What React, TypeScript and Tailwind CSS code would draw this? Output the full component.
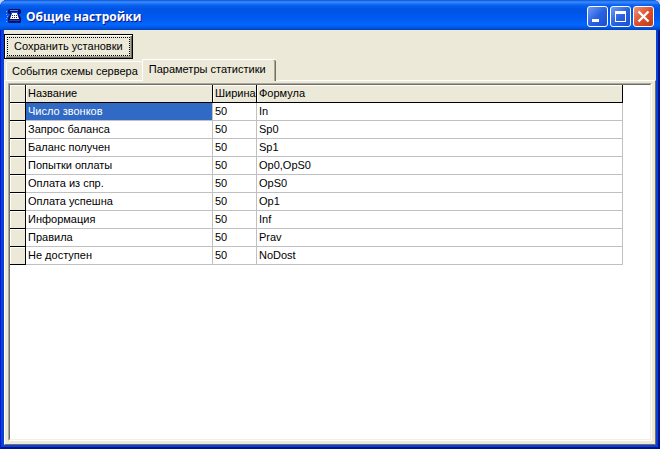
import { useState } from 'react';

interface StatRow {
  name: string;
  width: number;
  formula: string;
}

const rows: StatRow[] = [
  { name: 'Число звонков', width: 50, formula: 'In' },
  { name: 'Запрос баланса', width: 50, formula: 'Sp0' },
  { name: 'Баланс получен', width: 50, formula: 'Sp1' },
  { name: 'Попытки оплаты', width: 50, formula: 'Op0,OpS0' },
  { name: 'Оплата из спр.', width: 50, formula: 'OpS0' },
  { name: 'Оплата успешна', width: 50, formula: 'Op1' },
  { name: 'Информация', width: 50, formula: 'Inf' },
  { name: 'Правила', width: 50, formula: 'Prav' },
  { name: 'Не доступен', width: 50, formula: 'NoDost' },
];

function PhoneIcon() {
  return (
    <svg viewBox="0 0 16 16" className="h-4 w-4" aria-hidden="true">
      {/* Handset */}
      <path d="M4 1h9l2 1v3l-1 1h-2V4H5v2H3L2 5V2z" fill="#04106a" />
      <path d="M4 2h8v1H4z" fill="#5a86e0" />
      {/* Body with the keypad */}
      <path d="M5 5h7l3 5v4l-1 1H3l-1-1v-4z" fill="#04106a" />
      <path d="M6 5h5l2 6H4z" fill="#fff" />
      <path d="M6 7h1v1H6zM8 7h1v1H8zM10 7h1v1h-1zM6 9h1v1H6zM8 9h1v1H8zM10 9h1v1h-1z" fill="#1c2a50" />
      <path d="M3 12h11v1H3z" fill="#1d3fae" />
      <path d="M0 3h1v1H0zM0 6h1v1H0zM1 8h1v1H1zM0 10h1v1H0zM0 13h1v1H0z" fill="#7fb0f8" />
    </svg>
  );
}

function WindowButtons() {
  const base = 'flex h-[21px] w-[21px] items-center justify-center rounded-[3px] border border-white';
  const blue = 'bg-gradient-to-br from-[#6f9cf2] via-[#2a62e2] to-[#1b4fd0]';
  return (
    <div className="flex gap-[2px]">
      <button className={`${base} ${blue}`} aria-label="Свернуть">
        <svg viewBox="0 0 19 19" className="h-[19px] w-[19px]" shapeRendering="crispEdges">
          <path d="M4 12h7v3H4z" fill="#fff" />
        </svg>
      </button>
      <button className={`${base} ${blue}`} aria-label="Развернуть">
        <svg viewBox="0 0 19 19" className="h-[19px] w-[19px]" shapeRendering="crispEdges">
          <path fillRule="evenodd" d="M4 4h11v11H4zM5 7v7h9V7z" fill="#fff" />
        </svg>
      </button>
      <button
        className={`${base} bg-gradient-to-br from-[#ee9478] via-[#dc4f2c] to-[#c23c16]`}
        aria-label="Закрыть"
      >
        <svg viewBox="0 0 19 19" className="h-[19px] w-[19px]">
          <path d="M4.5 4.5l10 10M14.5 4.5l-10 10" stroke="#fff" strokeWidth="2.4" />
        </svg>
      </button>
    </div>
  );
}

function StatsGrid() {
  const [selected, setSelected] = useState(0);
  const fixed =
    'h-[18px] border-r border-b border-black bg-[#ece9d8] p-0 shadow-[inset_1px_1px_0_#fff]';
  const head = `${fixed} overflow-hidden pl-[2px] text-left font-normal whitespace-nowrap`;
  const cell = 'h-[18px] border-r border-b border-[#c0c0c0] p-0 pl-[2px] whitespace-nowrap';

  return (
    <table className="table-fixed border-separate border-spacing-0">
      <colgroup>
        <col className="w-[16px]" />
        <col className="w-[187px]" />
        <col className="w-[44px]" />
        <col className="w-[366px]" />
      </colgroup>
      <thead>
        <tr>
          <th className={fixed} />
          <th className={head}>Название</th>
          <th className={head}>Ширина</th>
          <th className={head}>Формула</th>
        </tr>
      </thead>
      <tbody>
        {rows.map((row, index) => (
          <tr key={row.name} onClick={() => setSelected(index)}>
            <td className={fixed} />
            <td className={`${cell} ${index === selected ? 'bg-[#316ac5] text-white' : ''}`}>
              {row.name}
            </td>
            <td className={cell}>{row.width}</td>
            <td className={cell}>{row.formula}</td>
          </tr>
        ))}
      </tbody>
    </table>
  );
}

export default function App() {
  return (
    <div className="bg-[#c4d4f4]">
      <div className="flex min-h-screen flex-col rounded-t-[7px] bg-[#0a3fd8] px-1 pb-1 font-['Liberation_Sans',Arial,sans-serif] text-[11px] leading-[13px] text-black shadow-[inset_1px_0_0_#0019cf,inset_-2px_-2px_0_#00138c]">
        {/* Title bar */}
        <header className="-mx-1 flex h-[30px] items-center rounded-t-[7px] bg-[linear-gradient(to_bottom,#0a53d2_0px,#3b8cff_2px,#0a62f0_5px,#0054e3_9px,#0058ee_17px,#0266fe_25px,#0254e0_28px,#0040c0_30px)] pt-[2px] pr-[6px] pl-[6px]">
          <PhoneIcon />
          <h1 className="ml-1 flex-1 pt-[2px] font-['Open_Sans',sans-serif] text-[12px] leading-4 font-bold text-white [text-shadow:1px_1px_0_#0a1883]">
            Общие настройки
          </h1>
          <WindowButtons />
        </header>

        <main className="flex flex-1 flex-col bg-[#ece9d8] pt-1">
          <div>
            <button className="h-[25px] border border-black bg-[#ece9d8] px-[2px] shadow-[inset_1px_1px_0_#fff,inset_-1px_-1px_0_#716f64,inset_-2px_-2px_0_#aca899]">
              <span className="block border border-dotted border-black px-[6px] py-[2px]">
                Сохранить установки
              </span>
            </button>
          </div>

          {/* Tabs */}
          <div role="tablist" className="flex items-end pl-[2px]">
            <button
              role="tab"
              aria-selected="false"
              className="h-[19px] rounded-t-[2px] border border-r-0 border-b-0 border-white pr-1 pl-[5px]"
            >
              События схемы сервера
            </button>
            <button
              role="tab"
              aria-selected="true"
              className="relative -mb-px h-[22px] rounded-t-[2px] border-t border-l border-white bg-[#ece9d8] pr-[10px] pb-[2px] pl-[6px] shadow-[inset_-1px_0_0_#716f64,inset_-2px_0_0_#aca899]"
            >
              Параметры статистики
            </button>
          </div>

          {/* Tab page */}
          <section
            role="tabpanel"
            className="flex flex-1 flex-col border-t border-r border-b border-l border-t-white border-r-[#716f64] border-b-[#716f64] border-l-white p-[3px] pt-[2px]"
          >
            <div className="flex flex-1 flex-col border border-t-[#aca899] border-r-white border-b-white border-l-[#aca899]">
              <div className="flex-1 overflow-auto border border-t-[#716f64] border-r-[#f1efe2] border-b-[#f1efe2] border-l-[#716f64] bg-white">
                <StatsGrid />
              </div>
            </div>
          </section>
        </main>
      </div>
    </div>
  );
}
